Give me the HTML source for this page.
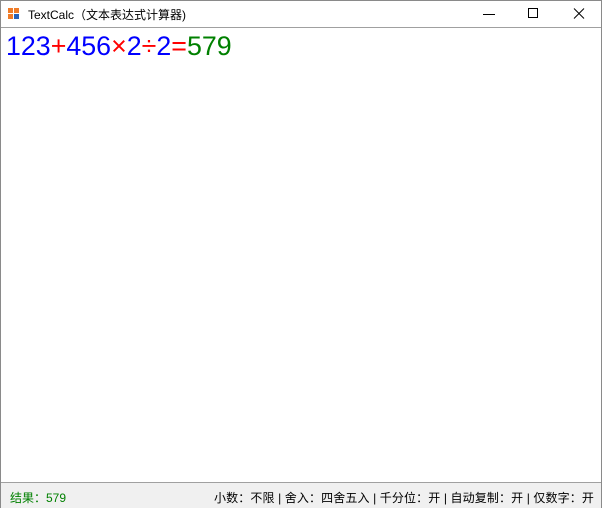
<!DOCTYPE html>
<html><head><meta charset="utf-8"><style>
*{margin:0;padding:0;box-sizing:border-box}
body{width:602px;height:508px;overflow:hidden;background:#fff;font-family:"Liberation Sans","Noto Sans CJK SC",sans-serif;position:relative}
.win{position:absolute;left:0;top:0;width:602px;height:508px;border:1px solid #8a8a8a}
.title{position:absolute;left:0;top:0;width:600px;height:27px;border-bottom:1px solid #a0a0a0;background:#fff}
.title .t{position:absolute;left:27px;top:5px;font-size:12px;color:#000}
.ic{position:absolute;width:5px;height:5px}
.expr{position:absolute;left:5px;top:28px;font-size:26.8px;line-height:34px;white-space:nowrap}
.b{color:#0000ff}.r{color:#ff0000}.g{color:#008000}
.status{position:absolute;left:0;top:481px;width:600px;height:26px;background:#f0f0f0;border-top:1px solid #a0a0a0;font-size:12px}
.status .l{position:absolute;left:9px;top:6px;color:#008000}
.status .rt{position:absolute;right:7px;top:6px;color:#000;letter-spacing:0.12px}
</style></head><body>
<div class="win">
<div class="title">
<div class="ic" style="left:7px;top:7px;background:#f07c28"></div>
<div class="ic" style="left:13px;top:7px;background:#f07c28"></div>
<div class="ic" style="left:7px;top:13px;background:#f07c28"></div>
<div class="ic" style="left:13px;top:13px;background:#2a63b8"></div>
<div class="t">TextCalc（文本表达式计算器)</div>
<svg style="position:absolute;left:480px;top:6px" width="110" height="14">
<line x1="2" y1="7.5" x2="14" y2="7.5" stroke="#000"/>
<rect x="47.5" y="1.5" width="9" height="9" fill="none" stroke="#000"/>
<path d="M93 1.5l10 10M103 1.5l-10 10" stroke="#000"/>
</svg>
</div>
<div class="expr"><span class="b">123</span><span class="r">+</span><span class="b">456</span><span class="r">×</span><span class="b">2</span><span class="r">÷</span><span class="b">2</span><span class="r">=</span><span class="g">579</span></div>
<div class="status"><span class="l">结果：579</span><span class="rt">小数：不限 | 舍入：四舍五入 | 千分位：开 | 自动复制：开 | 仅数字：开</span></div>
</div>
</body></html>
